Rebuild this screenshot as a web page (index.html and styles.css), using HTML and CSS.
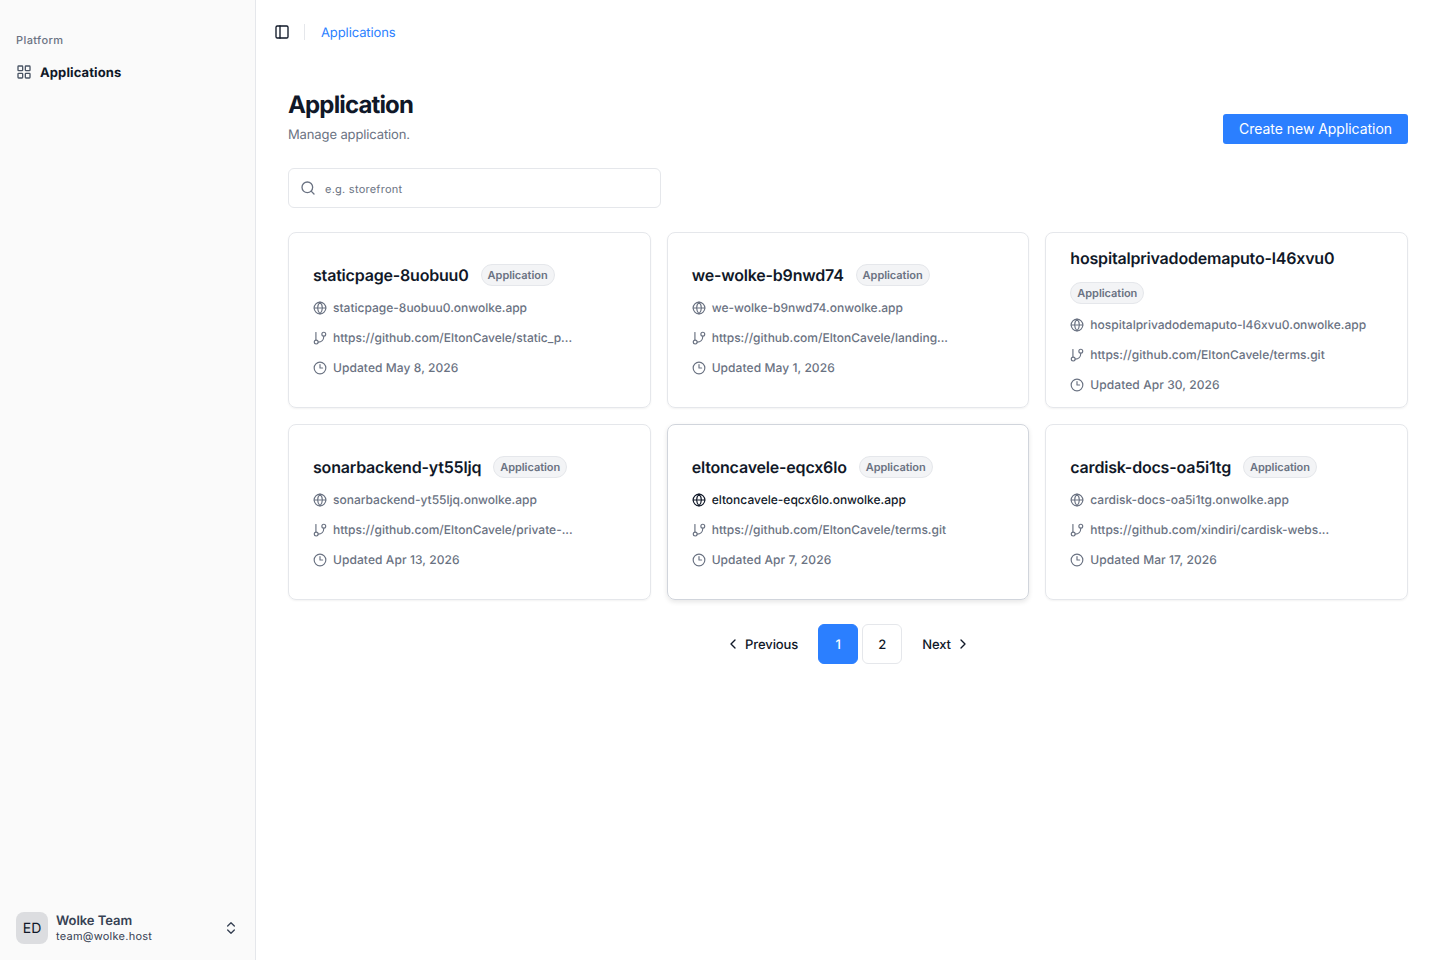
FILE: index.html
```html
<!DOCTYPE html>
<html lang="en">
<head>
    <meta charset="UTF-8">
    <title>Applications</title>
    <link rel="stylesheet" href="styles.css">
</head>
<body>
    <!-- Icon set -->
    <svg class="icon-defs">
        <symbol id="grid" viewBox="0 0 24 24"><rect x="3" y="3" width="7" height="7" rx="1"/><rect x="14" y="3" width="7" height="7" rx="1"/><rect x="14" y="14" width="7" height="7" rx="1"/><rect x="3" y="14" width="7" height="7" rx="1"/></symbol>
        <symbol id="panel" viewBox="0 0 24 24"><rect x="3" y="3" width="18" height="18" rx="2"/><path d="M9 3v18"/></symbol>
        <symbol id="search" viewBox="0 0 24 24"><circle cx="11" cy="11" r="8"/><path d="m21 21-4.3-4.3"/></symbol>
        <symbol id="globe" viewBox="0 0 24 24"><circle cx="12" cy="12" r="10"/><path d="M12 2a14.5 14.5 0 0 0 0 20 14.5 14.5 0 0 0 0-20"/><path d="M2 12h20"/></symbol>
        <symbol id="branch" viewBox="0 0 24 24"><path d="M5 2.5v13"/><circle cx="18.5" cy="5.5" r="3.3"/><circle cx="5.5" cy="19" r="3.3"/><path d="M18.5 9c0 6-4 10-9.5 10"/></symbol>
        <symbol id="clock" viewBox="0 0 24 24"><circle cx="12" cy="12" r="10"/><path d="M12 6v6h4.5"/></symbol>
        <symbol id="left" viewBox="0 0 24 24"><path d="m15 18-6-6 6-6"/></symbol>
        <symbol id="right" viewBox="0 0 24 24"><path d="m9 18 6-6-6-6"/></symbol>
        <symbol id="updown" viewBox="0 0 24 24"><path d="m7 15 5 5 5-5"/><path d="m7 9 5-5 5 5"/></symbol>
    </svg>

    <div class="layout">
        <aside class="sidebar">
            <nav>
                <div class="nav-label">Platform</div>
                <a class="nav-item"><svg class="icon"><use href="#grid"/></svg><span>Applications</span></a>
            </nav>
            <div class="user">
                <div class="avatar">ED</div>
                <div class="user-info">
                    <div class="user-name">Wolke Team</div>
                    <div class="user-email">team@wolke.host</div>
                </div>
                <svg class="icon"><use href="#updown"/></svg>
            </div>
        </aside>

        <main class="main">
            <header class="topbar">
                <svg class="icon"><use href="#panel"/></svg>
                <span class="divider"></span>
                <a class="crumb">Applications</a>
            </header>

            <div class="content">
                <div class="page-head">
                    <div>
                        <h1>Application</h1>
                        <p>Manage application.</p>
                    </div>
                    <button class="create-button">Create new Application</button>
                </div>

                <div class="search">
                    <svg class="icon"><use href="#search"/></svg>
                    <input type="text" placeholder="e.g. storefront">
                </div>

                <div class="cards">
                    <div class="card">
                        <div class="card-head"><h2>staticpage-8uobuu0</h2><span class="badge">Application</span></div>
                        <a class="row"><svg class="icon"><use href="#globe"/></svg><span>staticpage-8uobuu0.onwolke.app</span></a>
                        <div class="row"><svg class="icon"><use href="#branch"/></svg><span>https://github.com/EltonCavele/static_p...</span></div>
                        <div class="row updated"><svg class="icon"><use href="#clock"/></svg><span>Updated May 8, 2026</span></div>
                    </div>
                    <div class="card">
                        <div class="card-head"><h2>we-wolke-b9nwd74</h2><span class="badge">Application</span></div>
                        <a class="row"><svg class="icon"><use href="#globe"/></svg><span>we-wolke-b9nwd74.onwolke.app</span></a>
                        <div class="row"><svg class="icon"><use href="#branch"/></svg><span>https://github.com/EltonCavele/landing...</span></div>
                        <div class="row updated"><svg class="icon"><use href="#clock"/></svg><span>Updated May 1, 2026</span></div>
                    </div>
                    <div class="card">
                        <div class="card-head"><h2>hospitalprivadodemaputo-l46xvu0</h2><span class="badge">Application</span></div>
                        <a class="row"><svg class="icon"><use href="#globe"/></svg><span>hospitalprivadodemaputo-l46xvu0.onwolke.app</span></a>
                        <div class="row"><svg class="icon"><use href="#branch"/></svg><span>https://github.com/EltonCavele/terms.git</span></div>
                        <div class="row updated"><svg class="icon"><use href="#clock"/></svg><span>Updated Apr 30, 2026</span></div>
                    </div>
                    <div class="card">
                        <div class="card-head"><h2>sonarbackend-yt55ljq</h2><span class="badge">Application</span></div>
                        <a class="row"><svg class="icon"><use href="#globe"/></svg><span>sonarbackend-yt55ljq.onwolke.app</span></a>
                        <div class="row"><svg class="icon"><use href="#branch"/></svg><span>https://github.com/EltonCavele/private-...</span></div>
                        <div class="row updated"><svg class="icon"><use href="#clock"/></svg><span>Updated Apr 13, 2026</span></div>
                    </div>
                    <div class="card active">
                        <div class="card-head"><h2>eltoncavele-eqcx6lo</h2><span class="badge">Application</span></div>
                        <a class="row"><svg class="icon"><use href="#globe"/></svg><span>eltoncavele-eqcx6lo.onwolke.app</span></a>
                        <div class="row"><svg class="icon"><use href="#branch"/></svg><span>https://github.com/EltonCavele/terms.git</span></div>
                        <div class="row updated"><svg class="icon"><use href="#clock"/></svg><span>Updated Apr 7, 2026</span></div>
                    </div>
                    <div class="card">
                        <div class="card-head"><h2>cardisk-docs-oa5i1tg</h2><span class="badge">Application</span></div>
                        <a class="row"><svg class="icon"><use href="#globe"/></svg><span>cardisk-docs-oa5i1tg.onwolke.app</span></a>
                        <div class="row"><svg class="icon"><use href="#branch"/></svg><span>https://github.com/xindiri/cardisk-webs...</span></div>
                        <div class="row updated"><svg class="icon"><use href="#clock"/></svg><span>Updated Mar 17, 2026</span></div>
                    </div>
                </div>

                <nav class="pagination">
                    <a class="page-step prev"><svg class="icon"><use href="#left"/></svg><span>Previous</span></a>
                    <a class="page current"><span>1</span></a>
                    <a class="page"><span>2</span></a>
                    <a class="page-step next"><span>Next</span><svg class="icon"><use href="#right"/></svg></a>
                </nav>
            </div>
        </main>
    </div>
</body>
</html>
```
FILE: styles.css
```css
* {
    box-sizing: border-box;
}
body {
    margin: 0;
    font-family: Inter, sans-serif;
    font-size: 13px;
    color: #101828;
    background: #fff;
    text-rendering: geometricPrecision;
}
h1, h2, p {
    margin: 0;
}
.icon-defs {
    display: none;
}
.icon {
    width: 16px;
    height: 16px;
    flex-shrink: 0;
    fill: none;
    stroke: currentColor;
    stroke-width: 2;
    stroke-linecap: round;
    stroke-linejoin: round;
}
.layout {
    display: flex;
    height: 100vh;
}

/* Sidebar */
.sidebar {
    width: 256px;
    flex-shrink: 0;
    display: flex;
    flex-direction: column;
    justify-content: space-between;
    padding: 24px 16px 16px;
    background: #fafafa;
    border-right: 1px solid #e5e7eb;
}
.nav-label {
    height: 32px;
    line-height: 32px;
    font-size: 11px;
    font-weight: 500;
    letter-spacing: 0.4px;
    color: #6a7282;
}
.nav-item {
    display: flex;
    align-items: center;
    gap: 8px;
    height: 32px;
    font-weight: 700;
    letter-spacing: 0.1px;
}
.nav-item span {
    padding-top: 2px;
}
.nav-item .icon {
    color: #4a5565;
}
.user {
    display: flex;
    align-items: center;
    gap: 8px;
    height: 32px;
    color: #364153;
}
.avatar {
    width: 32px;
    height: 32px;
    line-height: 34px;
    border-radius: 8px;
    text-align: center;
    font-size: 14px;
    color: #101828;
    background: #dcdde0;
}
.user-info {
    flex: 1;
}
.user-name {
    font-weight: 600;
    line-height: 16px;
    letter-spacing: -0.05px;
}
.user-email {
    font-size: 11px;
    line-height: 15px;
    letter-spacing: 0.25px;
}

/* Main column */
.main {
    flex: 1;
}
.topbar {
    display: flex;
    align-items: center;
    height: 64px;
    padding-left: 18px;
}
.divider {
    width: 1px;
    height: 16px;
    margin: 0 16px 0 14px;
    background: #e5e7eb;
}
.crumb {
    padding-top: 2px;
    letter-spacing: -0.1px;
    color: #2b7fff;
}
.content {
    padding: 24px 32px;
}
.page-head {
    display: flex;
    justify-content: space-between;
    align-items: flex-end;
    height: 56px;
}
.page-head > div {
    align-self: flex-start;
}
h1 {
    font-size: 24px;
    font-weight: 700;
    line-height: 34px;
    letter-spacing: -0.85px;
}
.page-head p {
    line-height: 27px;
    letter-spacing: -0.12px;
    color: #6a7282;
}
.create-button {
    height: 30px;
    padding: 0 16px 1px;
    border: none;
    border-radius: 3px;
    font-family: inherit;
    font-size: 14px;
    letter-spacing: -0.04px;
    color: #fff;
    background: #2b7fff;
}
.search {
    display: flex;
    align-items: center;
    gap: 9px;
    width: 373px;
    height: 40px;
    margin-top: 24px;
    padding: 0 11px;
    border: 1px solid #e5e7eb;
    border-radius: 6px;
    color: #6a7282;
}
.search input {
    flex: 1;
    border: none;
    outline: none;
    padding: 2px 0 0;
    font-family: inherit;
    font-size: 11px;
    letter-spacing: 0.25px;
    text-rendering: geometricPrecision;
}
.search input::placeholder {
    color: #6a7282;
}

/* Application cards */
.cards {
    display: grid;
    grid-template-columns: repeat(3, 1fr);
    gap: 16px;
    margin-top: 24px;
}
.card {
    display: flex;
    flex-direction: column;
    justify-content: center;
    gap: 12px;
    height: 176px;
    padding: 0 24px;
    border: 1px solid #e5e7eb;
    border-radius: 8px;
    box-shadow: 0 1px 2px rgba(0, 0, 0, 0.05);
}
.card.active {
    border-color: #d1d5dc;
    box-shadow: 0 2px 5px rgba(0, 0, 0, 0.1);
}
.card-head {
    display: flex;
    flex-wrap: wrap;
    align-items: center;
    gap: 12px;
}
h2 {
    font-size: 16px;
    font-weight: 600;
    line-height: 24px;
    letter-spacing: -0.19px;
}
.badge {
    height: 22px;
    padding: 0 6px;
    border: 1px solid #e5e7eb;
    border-radius: 11px;
    font-size: 11px;
    font-weight: 600;
    line-height: 20px;
    letter-spacing: -0.05px;
    color: #6a7282;
    background: #f3f4f6;
}
.row {
    display: flex;
    align-items: center;
    gap: 6px;
    height: 18px;
    font-size: 12px;
    font-weight: 500;
    line-height: 16px;
    color: #6a7282;
}
.row span {
    padding-bottom: 1px;
}
.row .icon {
    width: 14px;
    height: 14px;
}
.row.updated {
    letter-spacing: 0.08px;
}
.card.active a.row {
    color: #101828;
}

/* Pagination */
.pagination {
    display: flex;
    justify-content: center;
    gap: 4px;
    margin-top: 24px;
}
.page, .page-step {
    display: flex;
    align-items: center;
    justify-content: center;
    height: 40px;
    font-weight: 500;
}
.pagination span {
    padding-top: 2px;
}
.page {
    width: 40px;
    border: 1px solid #e5e7eb;
    border-radius: 6px;
}
.page.current {
    border-color: #2b7fff;
    color: #fff;
    background: #2b7fff;
}
.page-step {
    gap: 4px;
    padding: 0 16px;
    letter-spacing: -0.1px;
}
```
